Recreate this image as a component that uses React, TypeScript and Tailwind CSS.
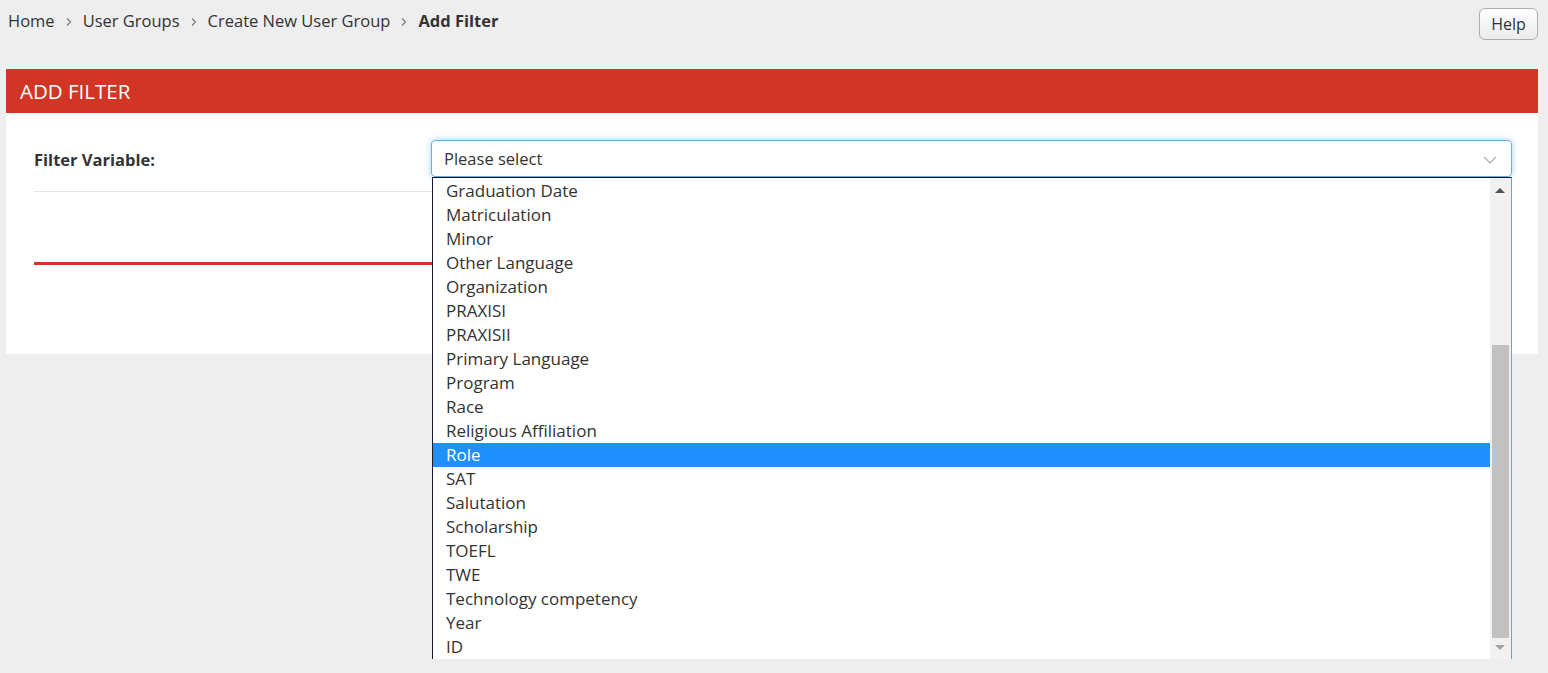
import React from "react";

const items = [
  "Graduation Date",
  "Matriculation",
  "Minor",
  "Other Language",
  "Organization",
  "PRAXISI",
  "PRAXISII",
  "Primary Language",
  "Program",
  "Race",
  "Religious Affiliation",
  "Role",
  "SAT",
  "Salutation",
  "Scholarship",
  "TOEFL",
  "TWE",
  "Technology competency",
  "Year",
  "ID",
];

function Chev() {
  return (
    <svg width="6" height="10" viewBox="0 0 6 10" className="mx-[11px] mt-[2px]">
      <path d="M1 1.5 L4.5 5 L1 8.5" fill="none" stroke="#777" strokeWidth="1.1" />
    </svg>
  );
}

export default function App() {
  return (
    <div
      className="min-h-screen bg-[#eeeeee] text-[#333]"
      style={{ fontFamily: '"Open Sans", "Noto Sans", sans-serif' }}
    >
      <div className="flex items-start justify-between pl-[8px] pr-[10px] pt-[8px]">
        <div className="flex items-center text-[16.5px] leading-[26px]">
          <span>Home</span>
          <Chev />
          <span>User Groups</span>
          <Chev />
          <span>Create New User Group</span>
          <Chev />
          <span className="font-bold">Add Filter</span>
        </div>
        <button className="h-[32px] w-[59px] rounded-[6px] border border-[#adadad] bg-gradient-to-b from-white to-[#ebebeb] text-[16px] text-[#333]">
          Help
        </button>
      </div>

      <div className="ml-[6px] mr-[10px] mt-[29px]">
        <div className="flex h-[44px] items-center bg-[#d13526] pl-[14px] text-[20.5px] text-white">
          ADD FILTER
        </div>
        <div className="bg-white pl-[28px] pr-[26px] pt-[27px] pb-[89px]">
          <div className="flex items-center">
            <div className="w-[397px] pt-[3px] text-[16.5px] font-bold">Filter Variable:</div>
            <div className="relative flex-1">
              <div className="flex h-[37px] items-center justify-between rounded-[4px] border border-[#66afe9] pl-[12px] pr-[14px] pt-[2px] text-[16.5px] shadow-[0_0_6px_rgba(102,175,233,0.6)]">
                <span>Please select</span>
                <svg width="14" height="8" viewBox="0 0 14 8">
                  <path d="M1 1 L7 7 L13 1" fill="none" stroke="#aaa" strokeWidth="1.1" />
                </svg>
              </div>
              <div className="absolute left-[1px] right-0 top-[37px] z-10 flex h-[482px] border-l border-t border-l-[#1a1a3a] border-t-[#111] border-r border-r-[#7f9bd4] bg-white">
                <div className="flex-1 pt-[1px]">
                  {items.map((it) => (
                    <div
                      key={it}
                      className={
                        "h-[24px] pl-[13px] text-[17px] leading-[24px] " +
                        (it === "Role" ? "bg-[#1e90ff] text-white" : "text-[#333]")
                      }
                    >
                      {it}
                    </div>
                  ))}
                </div>
                <div className="relative w-[21px] bg-[#f1f1f1]">
                  <svg className="absolute left-[5px] top-[9px]" width="10" height="6" viewBox="0 0 10 6">
                    <path d="M0 6 L5 1 L10 6 Z" fill="#505050" />
                  </svg>
                  <div className="absolute left-[2px] right-[2px] top-[167px] h-[293px] bg-[#c1c1c1]" />
                  <svg className="absolute left-[5px] top-[467px]" width="10" height="6" viewBox="0 0 10 6">
                    <path d="M0 0 L10 0 L5 5 Z" fill="#a3a3a3" />
                  </svg>
                </div>
              </div>
            </div>
          </div>
          <div className="mt-[14px] border-t border-[#e5e5e5]" />
          <div className="mt-[70px] h-[3px] bg-[#d13526]" />
        </div>
      </div>
    </div>
  );
}
